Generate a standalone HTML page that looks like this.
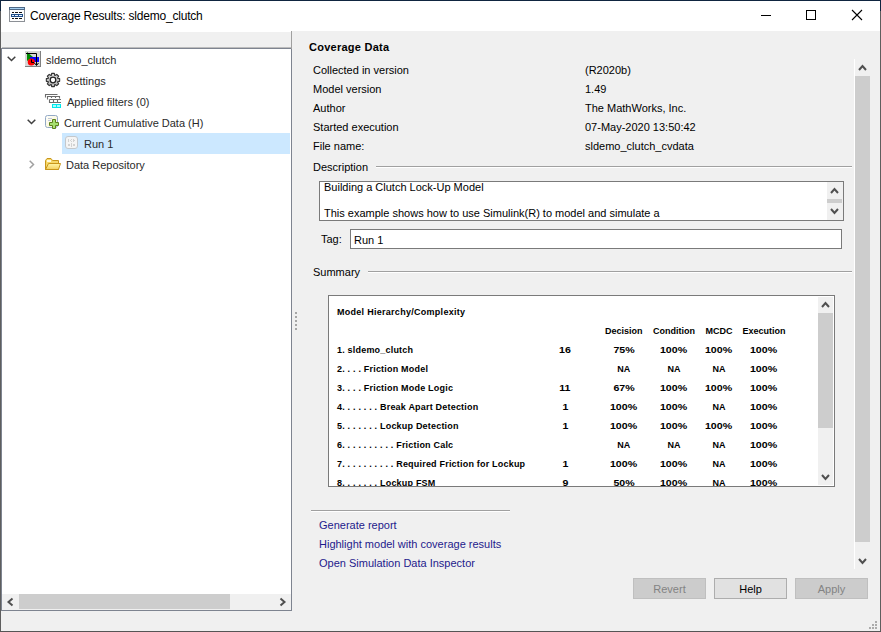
<!DOCTYPE html>
<html><head><meta charset="utf-8">
<style>
*{box-sizing:border-box;margin:0;padding:0}
html,body{width:881px;height:632px;overflow:hidden;background:#f0f0f0}
body{position:relative;font-family:"Liberation Sans",sans-serif;font-size:11px;color:#000}
.a{position:absolute}
.t{position:absolute;white-space:pre;line-height:13px;font-size:11px}
.b{position:absolute;white-space:pre;font-weight:bold;font-size:9px;line-height:11px}
svg{position:absolute;overflow:visible}
</style></head><body>
<!-- window borders -->
<div class="a" style="left:0;top:0;width:881px;height:1px;background:#0f2540"></div>
<div class="a" style="left:0;top:0;width:1px;height:632px;background:linear-gradient(#0f2540 0,#0f2540 11px,#5e5e5e 11px,#5e5e5e 100%)"></div>
<div class="a" style="left:880px;top:0;width:1px;height:632px;background:linear-gradient(#0f2540 0,#0f2540 11px,#5e5e5e 11px,#5e5e5e 100%)"></div>
<div class="a" style="left:0;top:631px;width:881px;height:1px;background:#555"></div>



<!-- title bar -->
<div class="a" style="left:1px;top:1px;width:879px;height:30px;background:#fff"></div>
<div class="a" style="left:1px;top:31px;width:290px;height:1px;background:#fff"></div>
<svg style="left:9px;top:7px" width="16" height="15" viewBox="0 0 16 15" shape-rendering="crispEdges">
  <rect x="0" y="0" width="16" height="15" fill="#8c9096"/>
  <rect x="1" y="3" width="14" height="11" fill="#fdfdfd"/>
  <rect x="0" y="0" width="16" height="3" fill="#4d6886"/>
  <rect x="1" y="1" width="14" height="1" fill="#a6d0f2"/>
  <rect x="3" y="5" width="2" height="1" fill="#111"/><rect x="6" y="5" width="3" height="1" fill="#111"/><rect x="10" y="5" width="3" height="1" fill="#111"/>
  <rect x="2" y="7" width="12" height="3" fill="#1f4e88"/>
  <rect x="3" y="8" width="2" height="1" fill="#e8f0ff"/><rect x="6" y="8" width="3" height="1" fill="#e8f0ff"/><rect x="10" y="8" width="3" height="1" fill="#e8f0ff"/>
  <rect x="3" y="11" width="2" height="1" fill="#111"/><rect x="6" y="11" width="3" height="1" fill="#111"/><rect x="10" y="11" width="3" height="1" fill="#111"/>
</svg>
<div class="t" style="left:30px;top:9px;font-size:12px;line-height:15px;letter-spacing:-0.2px">Coverage Results: sldemo_clutch</div>
<div class="a" style="left:761px;top:15px;width:10px;height:1px;background:#000"></div>
<div class="a" style="left:806px;top:10px;width:10px;height:10px;border:1px solid #000"></div>
<svg style="left:851px;top:9px" width="12" height="12" viewBox="0 0 12 12"><path d="M1 1L11 11M11 1L1 11" stroke="#000" stroke-width="1.1"/></svg>

<!-- left panel -->
<div class="a" style="left:1px;top:48px;width:291px;height:563px;background:#fff;border:1px solid #7e8490"></div>
<div class="a" style="left:291px;top:31px;width:1px;height:18px;background:#a0a0a0"></div>
<div class="a" style="left:2px;top:47px;width:289px;height:1px;background:#bcbcbc"></div>

<!-- tree -->
<div class="a" style="left:62px;top:133px;width:228px;height:21px;background:#cce8ff"></div>

<!-- tree icons -->
<svg style="left:0;top:0" width="881" height="632" viewBox="0 0 881 632">
 <defs>
  <radialGradient id="gg" cx="0.5" cy="0.4" r="0.6"><stop offset="0" stop-color="#f4f4f4"/><stop offset="1" stop-color="#a8a8a8"/></radialGradient>
  <linearGradient id="fy" x1="0" y1="0" x2="0" y2="1"><stop offset="0" stop-color="#fff6a8"/><stop offset="1" stop-color="#f4d060"/></linearGradient>
  <linearGradient id="cy" x1="0" y1="0" x2="1" y2="1"><stop offset="0" stop-color="#ffffff"/><stop offset="1" stop-color="#f6f2c8"/></linearGradient>
 </defs>
 <!-- model icon -->
 <rect x="25" y="51" width="16" height="16" fill="#808080"/>
 <rect x="25" y="51" width="15" height="15" fill="#d6d6d6"/>
 <path d="M27 52 L27 61 L33 57 Z" fill="#008a00"/>
 <rect x="30" y="57" width="9" height="5" fill="#0000ff"/>
 <circle cx="31.3" cy="62" r="3.6" fill="#ff0000"/>
 <path d="M31.5 59.5 V62.5 H34" fill="none" stroke="#000" stroke-width="1"/>
 <path d="M26 53.5 H36.5 V65" fill="none" stroke="#000" stroke-width="1"/>
 <path d="M34.5 63 L36.5 65.5 L38.5 63" fill="none" stroke="#000" stroke-width="1"/>
 <!-- gear -->
 <path d="M57.59 78.27 L59.66 78.65 L59.66 81.35 L57.59 81.73 L57.46 82.02 L58.67 83.76 L56.76 85.67 L55.02 84.46 L54.73 84.59 L54.35 86.66 L51.65 86.66 L51.27 84.59 L50.98 84.46 L49.24 85.67 L47.33 83.76 L48.54 82.02 L48.41 81.73 L46.34 81.35 L46.34 78.65 L48.41 78.27 L48.54 77.98 L47.33 76.24 L49.24 74.33 L50.98 75.54 L51.27 75.41 L51.65 73.34 L54.35 73.34 L54.73 75.41 L55.02 75.54 L56.76 74.33 L58.67 76.24 L57.46 77.98Z" fill="url(#gg)" stroke="#333" stroke-width="1.1" stroke-linejoin="round"/>
 <circle cx="53" cy="80" r="2.8" fill="#fff" stroke="#222" stroke-width="1.3"/>
 <!-- filter icon -->
 <g fill="none" stroke="#6c6c6c" stroke-width="1.1">
  <path d="M45.5 97.5 V94.5 H57.5"/>
  <path d="M47.5 99.5 V96.5 H59.5 V98.5 M51.5 96.5 V98 M55.5 96.5 V98"/>
  <path d="M49.5 99.5 H61 M49.5 99.5 V102.5 H61 M53.5 99.5 V102.5 M57.5 99.5 V102.5"/>
 </g>
 <rect x="52" y="104" width="9" height="4" fill="#00e8ec"/>
 <rect x="53" y="105" width="3" height="2" fill="#a8fcff"/>
 <rect x="57" y="105" width="3" height="2" fill="#a8fcff"/>
 <!-- cumulative icon -->
 <rect x="45.5" y="115.5" width="12" height="12" rx="2" fill="url(#cy)" stroke="#93a9c6" stroke-width="1"/>
 <path d="M48 118.5 h4 M48 120.5 h3" stroke="#c0c8d8" stroke-width="1"/>
 <path d="M52.5 119.5 h3 v3 h3 v3 h-3 v3 h-3 v-3 h-3 v-3 h3 z" fill="#a6e070" stroke="#5c7f1c" stroke-width="1"/>
 <!-- run icon -->
 <rect x="65.5" y="136.5" width="12" height="12" rx="2.5" fill="#f5f5f5" stroke="#c4c8cc" stroke-width="1"/>
 <g fill="#d2d2d2"><rect x="68" y="139" width="1" height="3"/><rect x="70" y="140" width="1" height="1"/><rect x="71" y="139" width="1" height="1"/><rect x="71" y="141" width="1" height="1"/><rect x="73" y="139" width="1" height="3"/><rect x="74" y="140" width="1" height="1"/><rect x="68" y="144" width="2" height="2"/><rect x="71" y="143" width="1" height="4"/><rect x="73" y="144" width="2" height="2"/></g>
 <!-- folder -->
 <path d="M45.5 169.5 V160.5 L47 158.5 H51 L52.5 160.5 H58.5 V169.5 Z" fill="#f6d86a" stroke="#c8961c" stroke-width="1"/>
 <path d="M45.5 169.5 L48.5 163.5 H60.5 L58.5 169.5 Z" fill="url(#fy)" stroke="#c8961c" stroke-width="1"/>
 <rect x="47" y="160" width="4" height="2" fill="#fffbe0"/>
</svg>
<svg style="left:7px;top:56px" width="9" height="6" viewBox="0 0 9 6"><path d="M0.7 0.7L4.5 4.5L8.3 0.7" fill="none" stroke="#404040" stroke-width="1.5"/></svg>
<div class="t" style="left:46px;top:54px;color:#2a2a2a">sldemo_clutch</div>
<div class="t" style="left:66px;top:75px;color:#2a2a2a">Settings</div>
<div class="t" style="left:67px;top:96px;color:#2a2a2a">Applied filters (0)</div>
<svg style="left:27px;top:119px" width="9" height="6" viewBox="0 0 9 6"><path d="M0.7 0.7L4.5 4.5L8.3 0.7" fill="none" stroke="#404040" stroke-width="1.5"/></svg>
<div class="t" style="left:64px;top:117px;color:#2a2a2a">Current Cumulative Data (H)</div>
<div class="t" style="left:84px;top:138px;color:#2a2a2a">Run 1</div>
<svg style="left:29px;top:160px" width="6" height="9" viewBox="0 0 6 9"><path d="M0.7 0.7L4.5 4.5L0.7 8.3" fill="none" stroke="#a0a0a0" stroke-width="1.5"/></svg>
<div class="t" style="left:66px;top:159px;color:#2a2a2a">Data Repository</div>

<!-- left h-scrollbar -->
<div class="a" style="left:2px;top:594px;width:289px;height:16px;background:#f0f0f0"></div>
<div class="a" style="left:19px;top:594px;width:211px;height:15px;background:#cdcdcd"></div>
<svg style="left:6px;top:597px" width="8" height="10" viewBox="0 0 8 10"><path d="M6.5 1.5L2.5 5L6.5 8.5" fill="none" stroke="#505050" stroke-width="2"/></svg>
<svg style="left:279px;top:597px" width="8" height="10" viewBox="0 0 8 10"><path d="M1.5 1.5L5.5 5L1.5 8.5" fill="none" stroke="#505050" stroke-width="2"/></svg>

<!-- splitter dots -->
<div class="a" style="left:295px;top:312px;width:2px;height:2px;background:#a6a6a6;box-shadow:0 4px #a6a6a6,0 8px #a6a6a6,0 12px #a6a6a6,0 16px #a6a6a6"></div>

<!-- right panel -->
<div class="t b" style="left:309px;top:41px;font-size:11px;line-height:13px;letter-spacing:0.25px">Coverage Data</div>
<div class="t" style="left:313px;top:64px">Collected in version</div>
<div class="t" style="left:313px;top:83px">Model version</div>
<div class="t" style="left:313px;top:102px">Author</div>
<div class="t" style="left:313px;top:121px">Started execution</div>
<div class="t" style="left:313px;top:140px">File name:</div>
<div class="t" style="left:585px;top:64px">(R2020b)</div>
<div class="t" style="left:585px;top:83px">1.49</div>
<div class="t" style="left:585px;top:102px">The MathWorks, Inc.</div>
<div class="t" style="left:585px;top:121px">07-May-2020 13:50:42</div>
<div class="t" style="left:585px;top:140px">sldemo_clutch_cvdata</div>

<div class="t" style="left:313px;top:161px">Description</div>
<div class="a" style="left:376px;top:166px;width:476px;height:1px;background:#a0a0a0;box-shadow:0 1px #fff"></div>
<div class="a" style="left:319px;top:181px;width:525px;height:40px;background:#fff;border:1px solid #7a7a7a"></div>
<div class="t" style="left:324px;top:181px">Building a Clutch Lock-Up Model</div>
<div class="t" style="left:324px;top:207px">This example shows how to use Simulink(R) to model and simulate a</div>
<div class="a" style="left:827px;top:182px;width:16px;height:38px;background:#f0f0f0"></div>
<div class="a" style="left:827px;top:199px;width:15px;height:4px;background:#cdcdcd"></div>
<svg style="left:830px;top:187px" width="9" height="7" viewBox="0 0 9 7"><path d="M1 6L4.5 2L8 6" fill="none" stroke="#505050" stroke-width="2"/></svg>
<svg style="left:830px;top:208px" width="9" height="7" viewBox="0 0 9 7"><path d="M1 1L4.5 5L8 1" fill="none" stroke="#505050" stroke-width="2"/></svg>

<div class="t" style="left:321px;top:233px">Tag:</div>
<div class="a" style="left:350px;top:229px;width:492px;height:20px;background:#fff;border:1px solid #7a7a7a"></div>
<div class="t" style="left:354px;top:234px">Run 1</div>

<div class="t" style="left:313px;top:266px">Summary</div>
<div class="a" style="left:368px;top:271px;width:484px;height:1px;background:#a0a0a0;box-shadow:0 1px #fff"></div>

<!-- summary box -->
<div class="a" style="left:328px;top:295px;width:507px;height:192px;background:#fff;border:1px solid #7a7a7a;overflow:hidden">
<div class="b" style="left:8px;top:11px;letter-spacing:0.28px">Model Hierarchy/Complexity</div>
<div class="b" style="left:254.8px;top:30px;width:80px;text-align:center">Decision</div>
<div class="b" style="left:305.0px;top:30px;width:80px;text-align:center">Condition</div>
<div class="b" style="left:350.0px;top:30px;width:80px;text-align:center">MCDC</div>
<div class="b" style="left:394.9px;top:30px;width:80px;text-align:center">Execution</div>
<div class="b" style="left:8px;top:49px;letter-spacing:0.2px">1. sldemo_clutch</div>
<div class="b" style="left:196.2px;top:49px;width:80px;text-align:center"><span style="display:inline-block;transform:scaleX(1.18)">16</span></div>
<div class="b" style="left:254.8px;top:49px;width:80px;text-align:center"><span style="display:inline-block;transform:scaleX(1.18)">75%</span></div>
<div class="b" style="left:305.0px;top:49px;width:80px;text-align:center"><span style="display:inline-block;transform:scaleX(1.18)">100%</span></div>
<div class="b" style="left:350.0px;top:49px;width:80px;text-align:center"><span style="display:inline-block;transform:scaleX(1.18)">100%</span></div>
<div class="b" style="left:394.9px;top:49px;width:80px;text-align:center"><span style="display:inline-block;transform:scaleX(1.18)">100%</span></div>
<div class="b" style="left:8px;top:68px;letter-spacing:0.2px">2. . . . Friction Model</div>
<div class="b" style="left:254.8px;top:68px;width:80px;text-align:center">NA</div>
<div class="b" style="left:305.0px;top:68px;width:80px;text-align:center">NA</div>
<div class="b" style="left:350.0px;top:68px;width:80px;text-align:center">NA</div>
<div class="b" style="left:394.9px;top:68px;width:80px;text-align:center"><span style="display:inline-block;transform:scaleX(1.18)">100%</span></div>
<div class="b" style="left:8px;top:87px;letter-spacing:0.2px">3. . . . Friction Mode Logic</div>
<div class="b" style="left:196.2px;top:87px;width:80px;text-align:center"><span style="display:inline-block;transform:scaleX(1.18)">11</span></div>
<div class="b" style="left:254.8px;top:87px;width:80px;text-align:center"><span style="display:inline-block;transform:scaleX(1.18)">67%</span></div>
<div class="b" style="left:305.0px;top:87px;width:80px;text-align:center"><span style="display:inline-block;transform:scaleX(1.18)">100%</span></div>
<div class="b" style="left:350.0px;top:87px;width:80px;text-align:center"><span style="display:inline-block;transform:scaleX(1.18)">100%</span></div>
<div class="b" style="left:394.9px;top:87px;width:80px;text-align:center"><span style="display:inline-block;transform:scaleX(1.18)">100%</span></div>
<div class="b" style="left:8px;top:106px;letter-spacing:0.2px">4. . . . . . . Break Apart Detection</div>
<div class="b" style="left:196.2px;top:106px;width:80px;text-align:center"><span style="display:inline-block;transform:scaleX(1.18)">1</span></div>
<div class="b" style="left:254.8px;top:106px;width:80px;text-align:center"><span style="display:inline-block;transform:scaleX(1.18)">100%</span></div>
<div class="b" style="left:305.0px;top:106px;width:80px;text-align:center"><span style="display:inline-block;transform:scaleX(1.18)">100%</span></div>
<div class="b" style="left:350.0px;top:106px;width:80px;text-align:center">NA</div>
<div class="b" style="left:394.9px;top:106px;width:80px;text-align:center"><span style="display:inline-block;transform:scaleX(1.18)">100%</span></div>
<div class="b" style="left:8px;top:125px;letter-spacing:0.2px">5. . . . . . . Lockup Detection</div>
<div class="b" style="left:196.2px;top:125px;width:80px;text-align:center"><span style="display:inline-block;transform:scaleX(1.18)">1</span></div>
<div class="b" style="left:254.8px;top:125px;width:80px;text-align:center"><span style="display:inline-block;transform:scaleX(1.18)">100%</span></div>
<div class="b" style="left:305.0px;top:125px;width:80px;text-align:center"><span style="display:inline-block;transform:scaleX(1.18)">100%</span></div>
<div class="b" style="left:350.0px;top:125px;width:80px;text-align:center"><span style="display:inline-block;transform:scaleX(1.18)">100%</span></div>
<div class="b" style="left:394.9px;top:125px;width:80px;text-align:center"><span style="display:inline-block;transform:scaleX(1.18)">100%</span></div>
<div class="b" style="left:8px;top:144px;letter-spacing:0.2px">6. . . . . . . . . . Friction Calc</div>
<div class="b" style="left:254.8px;top:144px;width:80px;text-align:center">NA</div>
<div class="b" style="left:305.0px;top:144px;width:80px;text-align:center">NA</div>
<div class="b" style="left:350.0px;top:144px;width:80px;text-align:center">NA</div>
<div class="b" style="left:394.9px;top:144px;width:80px;text-align:center"><span style="display:inline-block;transform:scaleX(1.18)">100%</span></div>
<div class="b" style="left:8px;top:163px;letter-spacing:0.2px">7. . . . . . . . . . Required Friction for Lockup</div>
<div class="b" style="left:196.2px;top:163px;width:80px;text-align:center"><span style="display:inline-block;transform:scaleX(1.18)">1</span></div>
<div class="b" style="left:254.8px;top:163px;width:80px;text-align:center"><span style="display:inline-block;transform:scaleX(1.18)">100%</span></div>
<div class="b" style="left:305.0px;top:163px;width:80px;text-align:center"><span style="display:inline-block;transform:scaleX(1.18)">100%</span></div>
<div class="b" style="left:350.0px;top:163px;width:80px;text-align:center">NA</div>
<div class="b" style="left:394.9px;top:163px;width:80px;text-align:center"><span style="display:inline-block;transform:scaleX(1.18)">100%</span></div>
<div class="b" style="left:8px;top:182px;letter-spacing:0.2px">8. . . . . . . Lockup FSM</div>
<div class="b" style="left:196.2px;top:182px;width:80px;text-align:center"><span style="display:inline-block;transform:scaleX(1.18)">9</span></div>
<div class="b" style="left:254.8px;top:182px;width:80px;text-align:center"><span style="display:inline-block;transform:scaleX(1.18)">50%</span></div>
<div class="b" style="left:305.0px;top:182px;width:80px;text-align:center"><span style="display:inline-block;transform:scaleX(1.18)">100%</span></div>
<div class="b" style="left:350.0px;top:182px;width:80px;text-align:center">NA</div>
<div class="b" style="left:394.9px;top:182px;width:80px;text-align:center"><span style="display:inline-block;transform:scaleX(1.18)">100%</span></div>
<div style="position:absolute;left:489px;top:1px;width:15px;height:188px;background:#f0f0f0"></div>
<div style="position:absolute;left:489px;top:17px;width:15px;height:115px;background:#cdcdcd"></div>
<svg style="left:492px;top:5px" width="9" height="7" viewBox="0 0 9 7"><path d="M1 6L4.5 2L8 6" fill="none" stroke="#505050" stroke-width="2"/></svg>
<svg style="left:492px;top:178px" width="9" height="7" viewBox="0 0 9 7"><path d="M1 1L4.5 5L8 1" fill="none" stroke="#505050" stroke-width="2"/></svg>
</div>

<div class="a" style="left:311px;top:510px;width:199px;height:1px;background:#a0a0a0;box-shadow:0 1px #fff"></div>
<div class="t" style="left:319px;top:519px;color:#1e1a8c">Generate report</div>
<div class="t" style="left:319px;top:538px;color:#1e1a8c">Highlight model with coverage results</div>
<div class="t" style="left:319px;top:557px;color:#1e1a8c">Open Simulation Data Inspector</div>

<!-- right scrollbar -->
<div class="a" style="left:854px;top:59px;width:1px;height:510px;background:#fff"></div>
<div class="a" style="left:855px;top:76px;width:15px;height:466px;background:#cdcdcd"></div>
<svg style="left:858px;top:64px" width="9" height="7" viewBox="0 0 9 7"><path d="M1 6L4.5 2L8 6" fill="none" stroke="#505050" stroke-width="2"/></svg>
<svg style="left:858px;top:558px" width="9" height="7" viewBox="0 0 9 7"><path d="M1 1L4.5 5L8 1" fill="none" stroke="#505050" stroke-width="2"/></svg>

<!-- buttons -->
<div class="a" style="left:633px;top:578px;width:73px;height:21px;background:#cccccc;border:1px solid #bfbfbf"></div>
<div class="t" style="left:633px;top:583px;width:73px;text-align:center;color:#838383">Revert</div>
<div class="a" style="left:714px;top:578px;width:73px;height:21px;background:#e1e1e1;border:1px solid #adadad"></div>
<div class="t" style="left:714px;top:583px;width:73px;text-align:center">Help</div>
<div class="a" style="left:795px;top:578px;width:73px;height:21px;background:#cccccc;border:1px solid #bfbfbf"></div>
<div class="t" style="left:795px;top:583px;width:73px;text-align:center;color:#838383">Apply</div>

<!-- resize grip -->
<div class="a" style="left:875px;top:621px;width:2px;height:2px;background:#ababab;box-shadow:-3px 3px #ababab,0 3px #ababab,-6px 6px #ababab,-3px 6px #ababab,0 6px #ababab"></div>
</body></html>
